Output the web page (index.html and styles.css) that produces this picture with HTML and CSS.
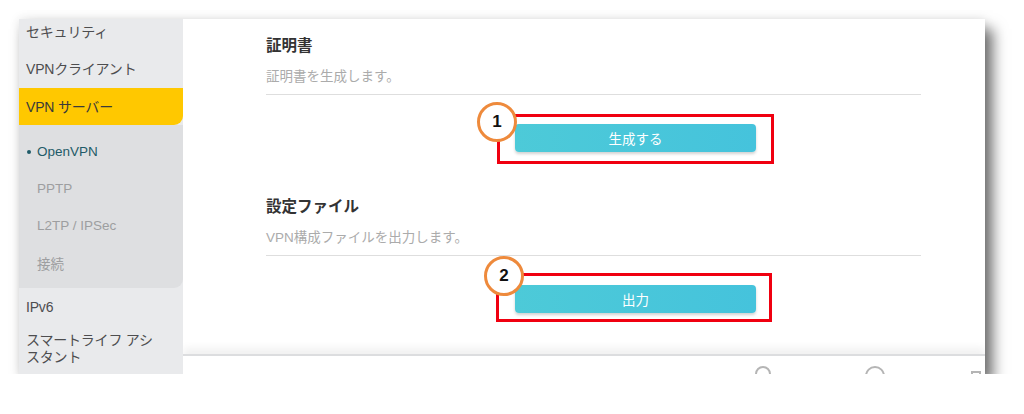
FILE: index.html
```html
<!DOCTYPE html>
<html lang="ja">
<head>
<meta charset="utf-8">
<title>VPN サーバー</title>
<link rel="stylesheet" href="styles.css">
</head>
<body>
<div class="shot">
  <aside class="sidebar">
    <ul class="menu">
      <li class="item">セキュリティ</li>
      <li class="item">VPNクライアント</li>
      <li class="item active">VPN サーバー</li>
      <li class="sub">
        <ul>
          <li class="sub-item current"><span class="dot"></span>OpenVPN</li>
          <li class="sub-item">PPTP</li>
          <li class="sub-item">L2TP / IPSec</li>
          <li class="sub-item">接続</li>
        </ul>
      </li>
      <li class="item">IPv6</li>
      <li class="item multi">スマートライフ アシ<br>スタント</li>
    </ul>
  </aside>
  <main class="main">
    <div class="content">
      <section class="section">
        <h2 class="title">証明書</h2>
        <p class="desc">証明書を生成します。</p>
        <div class="btn-row">
          <button class="btn">生成する</button>
          <span class="mark mark-1"></span>
          <span class="badge badge-1">1</span>
        </div>
      </section>
      <section class="section">
        <h2 class="title">設定ファイル</h2>
        <p class="desc">VPN構成ファイルを出力します。</p>
        <div class="btn-row">
          <button class="btn">出力</button>
          <span class="mark mark-2"></span>
          <span class="badge badge-2">2</span>
        </div>
      </section>
    </div>
    <footer class="footer">
      <span class="f-item"><span class="f-icon small"></span><span class="f-text">サポート</span></span>
      <span class="f-item"><span class="f-icon"></span><span class="f-text">ログアウト</span></span>
      <span class="f-square"></span>
    </footer>
  </main>
</div>
</body>
</html>
```
FILE: styles.css
```css
* { box-sizing: border-box; }
html, body { margin: 0; padding: 0; background: #fff; }
body {
  padding: 19px 0 0 19px;
  font-family: "Liberation Sans", "Noto Sans CJK JP", sans-serif;
}
.shot {
  width: 966px;
  height: 355px;
  display: flex;
  overflow: hidden;
  background: #fff;
  box-shadow: 8px 10px 13px rgba(0,0,0,0.55), 0 0 10px rgba(0,0,0,0.10);
}
.sidebar {
  width: 164px;
  flex: none;
  background: #e9eaec;
}
.menu, .sub ul { list-style: none; margin: 0; padding: 0; }
.menu { margin-top: -7px; }
.item {
  height: 37px;
  display: flex;
  align-items: center;
  padding-left: 7px;
  font-size: 14px;
  color: #4d4d4f;
  letter-spacing: -0.2px;
}
.item.multi {
  display: block;
  height: auto;
  padding-top: 7px;
  line-height: 17px;
}
.item.active {
  background: #ffc800;
  border-bottom-right-radius: 9px;
  color: #3a3a3a;
  height: 37px;
  margin-top: 2px;
  padding-bottom: 2px;
}
.sub {
  background: #dedfe1;
  border-bottom-right-radius: 9px;
  padding: 8px 0 7px;
}
.sub-item {
  height: 37px;
  display: flex;
  align-items: center;
  padding-left: 18px;
  font-size: 13.5px;
  color: #9d9ea0;
  position: relative;
}
.sub-item.current { color: #1f5b68; }
.dot {
  position: absolute;
  left: 8px;
  top: 17px;
  width: 4px;
  height: 4px;
  border-radius: 50%;
  background: #1f5b68;
}
.main {
  flex: 1;
  display: flex;
  flex-direction: column;
  overflow: hidden;
}
.content {
  height: 335px;
  flex: none;
  padding: 17px 64px 0 83px;
}
.section + .section { margin-top: 45px; }
.title {
  margin: 0;
  font-size: 15.5px;
  line-height: 20px;
  font-weight: bold;
  color: #333;
}
.desc {
  margin: 11px 0 0;
  font-size: 13.5px;
  line-height: 20px;
  color: #ababab;
  padding-bottom: 7px;
  border-bottom: 1px solid #dedede;
}
.btn-row {
  position: relative;
  margin-top: 29px;
  height: 28px;
}
.btn {
  display: block;
  margin-left: 249px;
  width: 241px;
  height: 28px;
  border: 0;
  border-radius: 4px;
  background: linear-gradient(90deg, #4dcad8, #45c3dc);
  box-shadow: 0 2px 3px rgba(0,0,0,0.18);
  color: #fff;
  font-family: inherit;
  font-size: 13.5px;
  padding: 0;
}
.mark {
  position: absolute;
  border: 3px solid #f00010;
  pointer-events: none;
}
.mark-1 { left: 231px; top: -10px; width: 277px; height: 50px; }
.mark-2 { left: 230px; top: -12px; width: 276px; height: 49px; }
.badge {
  position: absolute;
  width: 40px;
  height: 40px;
  border-radius: 50%;
  border: 3px solid #ee8a3c;
  background: #fff;
  display: flex;
  align-items: center;
  justify-content: center;
  font-weight: bold;
  font-size: 17px;
  color: #111;
}
.badge-1 { left: 211px; top: -22px; }
.badge-2 { left: 218px; top: -29px; }
.footer {
  flex: none;
  height: 40px;
  border-top: 2px solid #dcdddf;
  box-shadow: 0 -6px 8px rgba(0,0,0,0.06);
  display: flex;
  align-items: flex-start;
  padding: 10px 0 0 572px;
  gap: 40px;
  font-size: 12px;
  color: #b0b0b0;
  position: relative;
}
.f-item { display: flex; align-items: flex-start; gap: 6px; }
.f-text { padding-top: 5px; }
.f-icon {
  width: 20px;
  height: 20px;
  border: 2px solid #b5b5b5;
  border-radius: 50%;
}
.f-icon.small { width: 16px; height: 16px; }
.f-square {
  width: 10px;
  height: 12px;
  border: 2px solid #b5b5b5;
  margin-left: -20px;
  margin-top: 5px;
}
```
